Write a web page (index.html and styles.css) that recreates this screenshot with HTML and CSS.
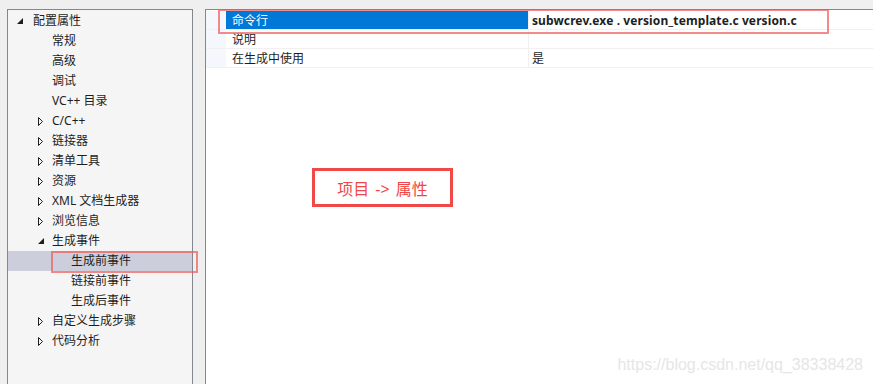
FILE: index.html
```html
<!DOCTYPE html>
<html>
<head>
  <meta charset="UTF-8">
  <title>属性页</title>
  <link rel="stylesheet" href="styles.css">
</head>
<body>
  <div class="window">
    <div class="tree">
      <div class="node lv1"><span class="twist"><svg width="6" height="6" viewBox="0 0 6 6"><polygon points="6,0 6,6 0,6" fill="#1e1e1e"/></svg></span>配置属性</div>
      <div class="node lv2"><span class="twist"></span>常规</div>
      <div class="node lv2"><span class="twist"></span>高级</div>
      <div class="node lv2"><span class="twist"></span>调试</div>
      <div class="node lv2"><span class="twist"></span>VC++ 目录</div>
      <div class="node lv2"><span class="twist"><svg width="6" height="9" viewBox="0 0 6 9"><polygon points="0.5,0.5 4.5,4.5 0.5,8.5" fill="none" stroke="#1e1e1e"/></svg></span>C/C++</div>
      <div class="node lv2"><span class="twist"><svg width="6" height="9" viewBox="0 0 6 9"><polygon points="0.5,0.5 4.5,4.5 0.5,8.5" fill="none" stroke="#1e1e1e"/></svg></span>链接器</div>
      <div class="node lv2"><span class="twist"><svg width="6" height="9" viewBox="0 0 6 9"><polygon points="0.5,0.5 4.5,4.5 0.5,8.5" fill="none" stroke="#1e1e1e"/></svg></span>清单工具</div>
      <div class="node lv2"><span class="twist"><svg width="6" height="9" viewBox="0 0 6 9"><polygon points="0.5,0.5 4.5,4.5 0.5,8.5" fill="none" stroke="#1e1e1e"/></svg></span>资源</div>
      <div class="node lv2"><span class="twist"><svg width="6" height="9" viewBox="0 0 6 9"><polygon points="0.5,0.5 4.5,4.5 0.5,8.5" fill="none" stroke="#1e1e1e"/></svg></span>XML 文档生成器</div>
      <div class="node lv2"><span class="twist"><svg width="6" height="9" viewBox="0 0 6 9"><polygon points="0.5,0.5 4.5,4.5 0.5,8.5" fill="none" stroke="#1e1e1e"/></svg></span>浏览信息</div>
      <div class="node lv2"><span class="twist"><svg width="6" height="6" viewBox="0 0 6 6"><polygon points="6,0 6,6 0,6" fill="#1e1e1e"/></svg></span>生成事件</div>
      <div class="node lv3 selected">生成前事件<span class="mark mark-tree"></span></div>
      <div class="node lv3">链接前事件</div>
      <div class="node lv3">生成后事件</div>
      <div class="node lv2"><span class="twist"><svg width="6" height="9" viewBox="0 0 6 9"><polygon points="0.5,0.5 4.5,4.5 0.5,8.5" fill="none" stroke="#1e1e1e"/></svg></span>自定义生成步骤</div>
      <div class="node lv2"><span class="twist"><svg width="6" height="9" viewBox="0 0 6 9"><polygon points="0.5,0.5 4.5,4.5 0.5,8.5" fill="none" stroke="#1e1e1e"/></svg></span>代码分析</div>
    </div>

    <div class="props">
      <div class="grid">
        <div class="row active">
          <div class="gutter"></div>
          <div class="name">命令行</div>
          <div class="value bold">subwcrev.exe . version_template.c version.c</div>
        </div>
        <div class="row">
          <div class="gutter"></div>
          <div class="name">说明</div>
          <div class="value"></div>
        </div>
        <div class="row">
          <div class="gutter"></div>
          <div class="name">在生成中使用</div>
          <div class="value">是</div>
        </div>
        <span class="mark mark-row"></span>
      </div>
      <div class="note">项目 -&gt; 属性</div>
    </div>
  </div>
  <div class="watermark">https://blog.csdn.net/qq_38338428</div>
</body>
</html>
```

FILE: styles.css
```css
html, body {
  margin: 0;
  height: 100%;
  overflow: hidden;
}
body {
  background-color: #efefef;
  font-family: "Noto Sans", "Noto Sans CJK SC", sans-serif;
  font-size: 12px;
  color: #1e1e1e;
  position: relative;
}
.window {
  display: flex;
  gap: 12px;
  padding: 9px 0 0 7px;
  height: 100%;
  box-sizing: border-box;
}

/* 左侧树 */
.tree {
  width: 184px;
  flex: none;
  background-color: #f5f5f5;
  border: 1px solid #828790;
  border-bottom: none;
  padding-top: 1px;
}
.node {
  position: relative;
  display: flex;
  align-items: center;
  height: 20px;
  line-height: 20px;
  white-space: nowrap;
}
.twist {
  display: flex;
  align-items: center;
  flex: none;
}
.lv1 {
  padding-left: 9px;
}
.lv1 .twist {
  width: 16px;
}
.lv2 {
  padding-left: 30px;
}
.lv2 .twist {
  width: 14px;
}
.lv3 {
  padding-left: 63px;
}
.selected {
  background-color: #cccedb;
}

/* 右侧属性表 */
.props {
  position: relative;
  flex: 1;
  background-color: #ffffff;
  border-left: 1px solid #828790;
  border-top: 1px solid #828790;
}
.grid {
  position: relative;
  padding-top: 1px;
}
.row {
  display: flex;
  height: 18px;
  line-height: 20px;
  border-bottom: 1px solid #f0f0f0;
}
.gutter {
  width: 20px;
  flex: none;
  background-color: #f4f7fc;
}
.name {
  width: 296px;
  flex: none;
  padding-left: 6px;
  border-right: 1px solid #f0f0f0;
}
.value {
  flex: 1;
  padding-left: 3px;
}
.bold {
  font-weight: bold;
  letter-spacing: 0.1px;
}
.row.active .name {
  background-color: #0078d7;
  color: #ffffff;
}

/* 红色标注框 */
.mark {
  position: absolute;
  border: 2px solid rgba(240, 90, 90, 0.7);
  box-sizing: border-box;
  pointer-events: none;
}
.mark-tree {
  left: 43px;
  top: 0;
  width: 147px;
  height: 22px;
}
.mark-row {
  left: 12px;
  top: -1px;
  width: 611px;
  height: 25px;
}
.note {
  position: absolute;
  left: 106px;
  top: 158px;
  width: 141px;
  height: 39px;
  box-sizing: border-box;
  border: 3px solid #f24848;
  color: #f04848;
  font-size: 16px;
  display: flex;
  align-items: center;
  justify-content: center;
  word-spacing: 2px;
}

.watermark {
  position: absolute;
  right: 10px;
  bottom: 10px;
  font-family: "Liberation Sans", Arial, sans-serif;
  font-size: 16px;
  color: #e6e6e6;
}
```
